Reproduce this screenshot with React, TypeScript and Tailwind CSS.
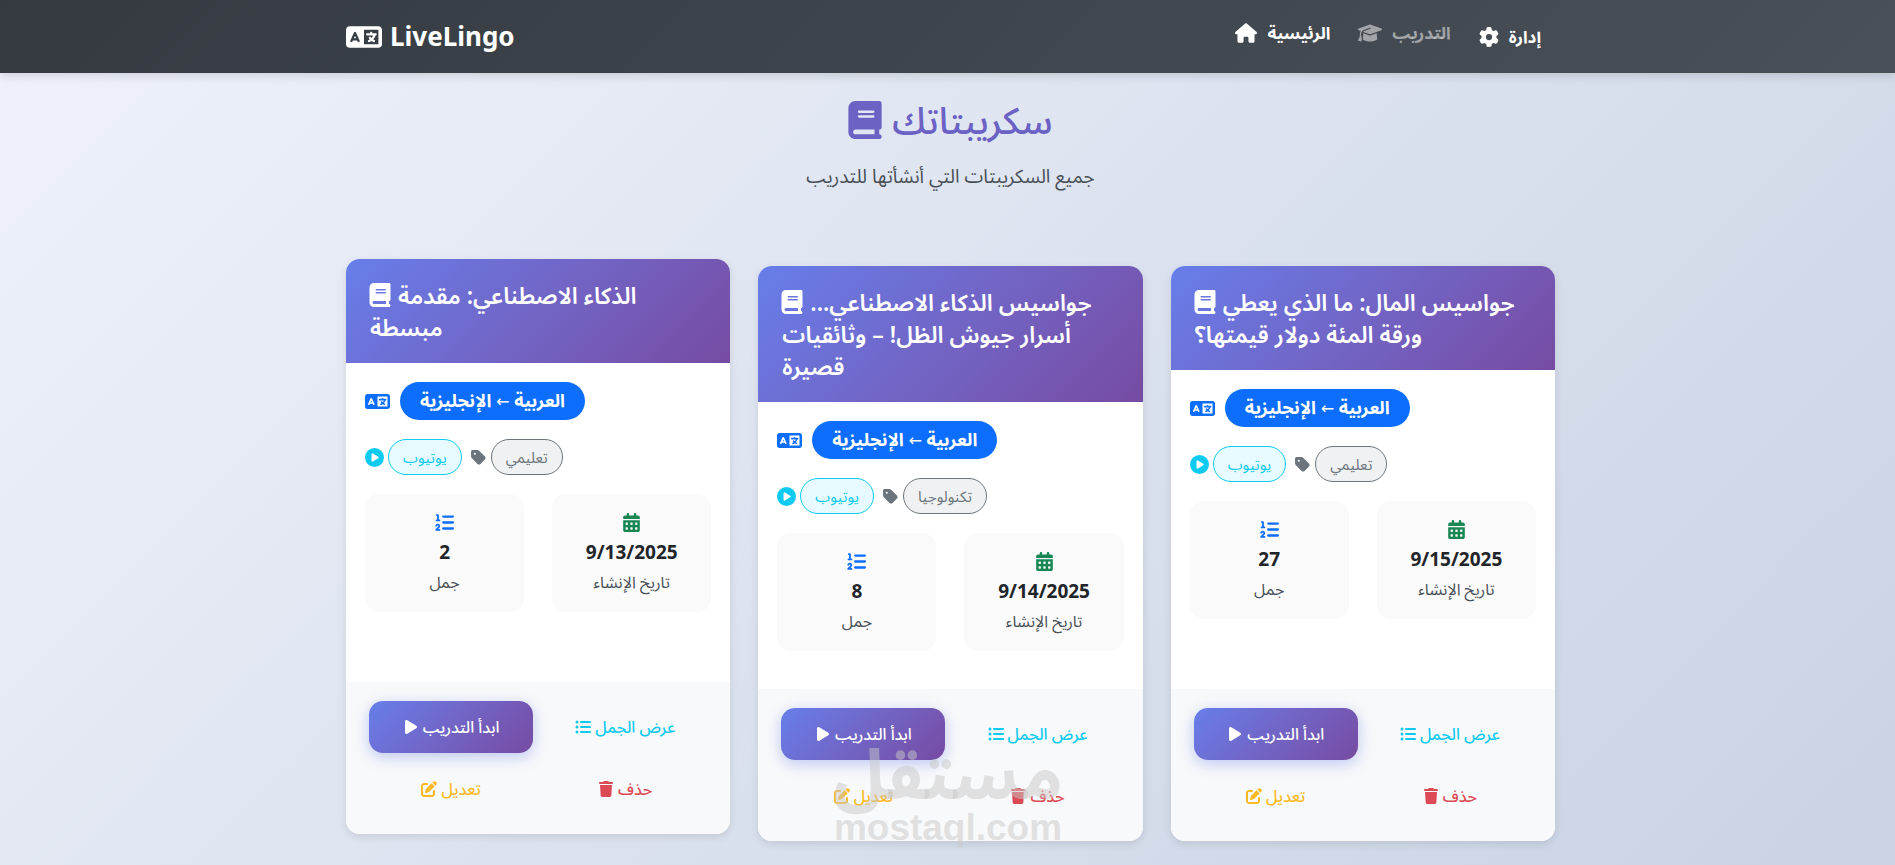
import type { ReactNode } from "react";
import {
  FaBook,
  FaCalendarDays,
  FaCirclePlay,
  FaGear,
  FaGraduationCap,
  FaHouse,
  FaLanguage,
  FaListOl,
  FaListUl,
  FaPenToSquare,
  FaPlay,
  FaTag,
  FaTrash,
} from "react-icons/fa6";

type Script = {
  title: string;
  category: string;
  sentences: number;
  date: string;
  raised?: boolean;
};

const scripts: Script[] = [
  { title: "الذكاء الاصطناعي: مقدمة مبسطة", category: "تعليمي", sentences: 2, date: "9/13/2025", raised: true },
  {
    title: "جواسيس الذكاء الاصطناعي... أسرار جيوش الظل! – وثائقيات قصيرة",
    category: "تكنولوجيا",
    sentences: 8,
    date: "9/14/2025",
  },
  { title: "جواسيس المال: ما الذي يعطي ورقة المئة دولار قيمتها؟", category: "تعليمي", sentences: 27, date: "9/15/2025" },
];

function Navbar() {
  return (
    <header className="bg-linear-135 from-[#343a40] to-[#495057] pl-1.5 shadow-[0_2px_10px_rgba(0,0,0,0.15)]">
      <nav className="mx-auto flex h-[73px] max-w-[1209px] items-center justify-between text-white">
        <a href="#" className="flex items-center gap-2 text-[26px] font-bold">
          <FaLanguage className="size-9" />
          LiveLingo
        </a>
        <div className="flex items-start gap-7 pr-3.5 pb-1 text-[17px] font-bold">
          <a href="#" className="flex items-center gap-2.5">
            <FaHouse className="size-[22px]" />
            <span>الرئيسية</span>
          </a>
          <a href="#" className="flex items-center gap-2.5 text-white/50">
            <FaGraduationCap className="size-6" />
            <span>التدريب</span>
          </a>
          <a href="#" className="flex items-center gap-2.5 pt-1">
            <FaGear className="size-5" />
            <span>إدارة</span>
          </a>
        </div>
      </nav>
    </header>
  );
}

function Stat({ icon, value, label }: { icon: ReactNode; value: string | number; label: string }) {
  return (
    <div className="flex h-[118px] flex-col items-center rounded-[14px] bg-[#fafafa] pt-[19px]">
      {icon}
      <strong className="mt-1.5 text-[19px] leading-7 text-[#212529]">{value}</strong>
      <span className="mt-0.5 text-[16px] leading-7 text-[#495057]">{label}</span>
    </div>
  );
}

function ScriptCard({ script }: { script: Script }) {
  return (
    <article
      className={
        "flex flex-col overflow-hidden rounded-[14px] bg-white shadow-[0_3px_8px_rgba(0,0,0,0.1)]" +
        (script.raised ? " -translate-y-[7px]" : "")
      }
    >
      <h2 className="bg-linear-135 from-[#667eea] to-[#764ba2] px-6 py-5 text-[23px] leading-8 font-semibold text-white">
        <FaBook className="mr-1.5 -ml-0.5 inline size-6 align-[-3px]" />
        {script.title}
      </h2>
      <div className="flex-1 px-[19px] pt-[19px] pb-[38px]">
        <div className="flex items-center gap-2.5">
          <FaLanguage className="size-[25px] text-[#0d6efd]" />
          <span className="rounded-full bg-[#0d6efd] px-5 text-[18px] leading-[37px] font-bold text-white">
            العربية <span className="font-['DejaVu_Sans',sans-serif] text-[16px] font-normal">←</span> الإنجليزية
          </span>
        </div>
        <div className="mt-[19px] flex items-center gap-1">
          <FaCirclePlay className="size-[19px] text-[#0dcaf0]" />
          <span className="rounded-full border border-[#0dcaf0] bg-[#e7faff] px-3.5 text-[15px] leading-[34px] text-[#0dcaf0]">
            يوتيوب
          </span>
          <FaTag className="ml-1 size-[17px] text-[#6c757d]" />
          <span className="rounded-full border border-[#6c757d] bg-[#f0f1f2] px-3.5 text-[15px] leading-[34px] text-[#6c757d]">
            {script.category}
          </span>
        </div>
        <div className="mt-[19px] grid grid-cols-2 gap-7">
          <Stat icon={<FaListOl className="size-[19px] text-[#0d6efd]" />} value={script.sentences} label="جمل" />
          <Stat icon={<FaCalendarDays className="size-[19px] text-[#198754]" />} value={script.date} label="تاريخ الإنشاء" />
        </div>
      </div>
      <div className="grid grid-cols-2 gap-2.5 bg-[#f8f9fa] px-[23px] py-[19px] text-[16px] font-medium">
        <button className="flex h-[52px] items-center justify-center gap-1 rounded-[14px] bg-linear-135 from-[#667eea] to-[#764ba2] text-white shadow-[0_4px_15px_rgba(102,126,234,0.4)]">
          <FaPlay />
          <span>ابدأ التدريب</span>
        </button>
        <button className="flex h-[52px] items-center justify-center gap-1 text-[#0dcaf0]">
          <FaListUl />
          <span>عرض الجمل</span>
        </button>
        <button className="flex h-[52px] items-center justify-center gap-1 text-[#fbb924]">
          <FaPenToSquare />
          <span>تعديل</span>
        </button>
        <button className="flex h-[52px] items-center justify-center gap-1 text-[#dc4a55]">
          <FaTrash />
          <span>حذف</span>
        </button>
      </div>
    </article>
  );
}

export default function App() {
  return (
    <div className="relative min-h-screen overflow-hidden bg-linear-135 from-[#eff2fa] to-[#c9d3e4] font-['Noto_Sans','Noto_Sans_Arabic',sans-serif]">
      <Navbar />
      <div className="pl-1.5">
        <main className="mx-auto max-w-[1209px]">
          <div className="flex flex-col items-center pt-6">
            <h1 className="flex h-[46px] items-center gap-2.5 text-[37px] leading-[46px] font-medium text-[#6b62c4]">
              <FaBook className="h-[38px] w-[34px]" />
              <span>سكريبتاتك</span>
            </h1>
            <p className="mt-[19px] text-[19px] leading-7 text-[#495057]">جميع السكريبتات التي أنشأتها للتدريب</p>
          </div>
          <div className="mt-[76px] grid grid-cols-3 gap-7">
            {scripts.map((s) => (
              <ScriptCard key={s.date} script={s} />
            ))}
          </div>
        </main>
      </div>
      <div className="pointer-events-none absolute top-[735px] left-[835px] flex w-[226px] flex-col items-center font-bold text-[#c8c8c8]/50">
        <span className="text-[69px] leading-[75px]">مستقل</span>
        <span className="font-['Liberation_Sans',sans-serif] text-[37px] leading-9">mostaql.com</span>
      </div>
    </div>
  );
}
